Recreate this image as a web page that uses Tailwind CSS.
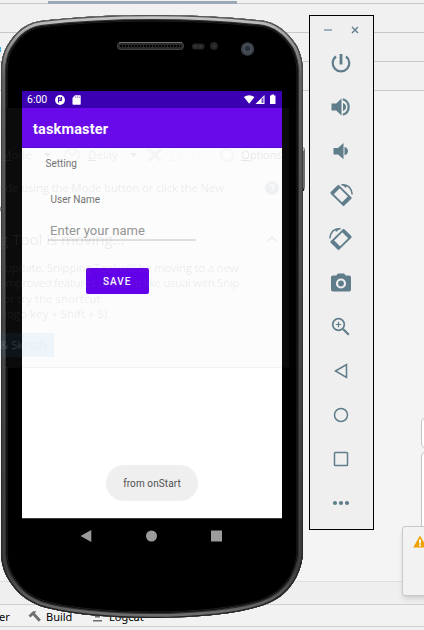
<!DOCTYPE html>
<html lang="en">
<head>
<meta charset="utf-8">
<title>Android Emulator</title>
<script src="https://cdn.jsdelivr.net/npm/@tailwindcss/browser@4"></script>
</head>
<body class="overflow-hidden">
<div class="relative w-[424px] h-[630px] overflow-hidden bg-[#f1f1f1] font-['Roboto',sans-serif]">

  <!-- IDE window behind the emulator -->
  <div class="flex flex-col h-full">
    <div class="h-1 shrink-0 border-b border-[#c9c9c9] relative"><div class="absolute left-12 top-[1px] w-[189px] h-[3px] bg-[#9aa7b5]"></div></div>
    <div class="h-[29px] shrink-0 border-b border-[#c9c9c9]"></div>
    <div class="h-[29px] shrink-0 border-b border-[#c9c9c9] flex items-end"><div class="w-[1px] h-[5px] mb-[9px] bg-[#40b6e0]"></div></div>
    <div class="h-[29px] shrink-0 border-b border-[#c9c9c9]"></div>
    <div class="h-[491px] shrink-0 border-b border-[#dfdfdf] bg-[#f4f4f4]"></div>
    <div class="h-[23px] shrink-0 border-b border-[#cfcfcf] bg-[#efefef]"></div>
    <div class="h-[22px] shrink-0 border-b border-[#cfcfcf] bg-[#f2f2f2] flex items-center font-['Noto_Sans',sans-serif] text-[11px] text-black pt-[2px] leading-[16px]">
      <span class="w-[28px] -ml-[1px]">er</span>
      <svg class="w-[15px] h-[14px]" viewBox="0 0 15 14"><path d="M1.500 5.500 6 1.200h3.500L7.800 3l6 6.800-2 2-6-6.600-2.300 2.400z" fill="#6e6e6e"/></svg>
      <span class="ml-[4px] w-[46px]">Build</span>
      <svg class="w-[11px] h-[12px]" viewBox="0 0 11 12"><path d="M2 1h5v1.500H2zM3 5h5v1.500H3zM1 9h9v1.500H1z" fill="#6e6e6e"/></svg>
      <span class="ml-[6px]">Logcat</span>
    </div>
  </div>

  <div class="absolute left-[421px] top-[418px] w-5 h-[30px] rounded border border-[#c4c4c4] bg-white"></div>
  <div class="absolute left-[421px] top-[452px] w-5 h-[90px] rounded border border-[#c4c4c4] bg-white"></div>
  <div class="absolute left-[402px] top-[526px] w-10 h-[70px] rounded-[3px] border border-[#c9c9c9] bg-[#f2f2f2] shadow-md pl-[10px] pt-[8px]">
    <svg class="w-[14px] h-[13px]" viewBox="0 0 14 13"><path d="M7 .5 13.800 12.500H.2z" fill="#eda200"/><path d="M6 4.500h2v4H6zM6 9.500h2v1.700H6z" fill="#fff"/></svg>
  </div>

  <!-- Phone body -->
  <svg class="absolute inset-0 w-[424px] h-[630px]" viewBox="0 0 424 630">
    <defs>
      <linearGradient id="rim" gradientUnits="userSpaceOnUse" x1="0" y1="15" x2="0" y2="618">
        <stop offset="0" stop-color="#c8c8c8"/><stop offset=".03" stop-color="#a8a8a8"/><stop offset=".1" stop-color="#626262"/><stop offset=".5" stop-color="#484848"/><stop offset=".92" stop-color="#3c3c3c"/><stop offset="1" stop-color="#707070"/>
      </linearGradient>
      <linearGradient id="edge" gradientUnits="userSpaceOnUse" x1="0" y1="15" x2="0" y2="618">
        <stop offset="0" stop-color="#555"/><stop offset=".1" stop-color="#444"/><stop offset="1" stop-color="#222"/>
      </linearGradient>
      <path id="body" d="M152 15C110 15 75 17 40 21C21 24 12 38 7 46Q1 56 1 72V555Q2 571 10 582C18 594 26 600 40 606C65 614 110 618 152 618C194 618 239 614 264 605C278 600 286 593 293 583Q301 571 303 555V72Q303 58 297 46C291 37 282 25 265 21C230 17 194 15 152 15Z"/>
      <clipPath id="bodyclip"><use href="#body"/></clipPath>
      <pattern id="mesh" width="3" height="3" patternUnits="userSpaceOnUse"><path d="M0 0h2v2H0z" fill="#000"/></pattern>
    </defs>
    <path d="M302 147h2l1 3v37l-1 4h-2z" fill="#6c6c6c"/>
    <path d="M302 147h2v4h-2z" fill="#bbb"/>
    <path d="M302 188h2v3h-2z" fill="#222"/>
    <g clip-path="url(#bodyclip)">
      <use href="#body" fill="#000"/>
      <use href="#body" fill="none" stroke="#222" stroke-width="13"/>
      <use href="#body" fill="none" stroke="#000" stroke-width="11.500"/>
      <use href="#body" fill="none" stroke="#303030" stroke-width="10.500"/>
      <use href="#body" fill="none" stroke="url(#rim)" stroke-width="8"/>
      <use href="#body" fill="none" stroke="url(#edge)" stroke-width="2.500"/>
    </g>
    <path d="M0 206v6l1.500-3z" fill="#888"/>
    <rect x="117.500" y="42.500" width="66" height="7" rx="3" fill="#292929" stroke="#444"/>
    <rect x="120" y="44" width="61" height="4" fill="url(#mesh)"/>
    <path d="M119 42.500h63" stroke="#707070"/>
    <rect x="192" y="43.500" width="12.500" height="6" rx="3" fill="#262626"/>
    <circle cx="195.500" cy="46.500" r="1.500" fill="#363636"/><circle cx="200.500" cy="46.500" r="1.500" fill="#363636"/>
    <circle cx="214" cy="46" r="4" fill="#232323"/><circle cx="214" cy="46" r="1.800" fill="#333"/>
    <circle cx="247.500" cy="49" r="6.700" fill="#3a4049"/><circle cx="247.500" cy="49" r="5" fill="#464c57"/><circle cx="247.500" cy="48.500" r="2.500" fill="#282d35"/>
    <path d="M6 108h283v259H6z" fill="#0c0c0c"/>
  </svg>

  <!-- Device screen -->
  <div class="absolute left-[22px] top-[91px] w-[260px] h-[462px] flex flex-col bg-black">
    <div class="h-[17px] shrink-0 bg-[#3a00b2] flex items-center text-white px-[5px]">
      <span class="text-[10.500px] leading-[15px] w-[28px]">6:00</span>
      <svg class="w-[10px] h-[10px]" viewBox="0 0 10 10"><circle cx="5" cy="5" r="4.900" fill="#fff"/><path d="M3.500 2.200v5.300M3.500 2.700h1.700v2.600H3.500M6.600 2v3.600H5" fill="none" stroke="#3a00b2" stroke-width="1"/></svg>
      <svg class="w-[9px] h-[10px] ml-[7px]" viewBox="0 0 9 10"><path d="M3 .2h5q.7 0 .7.7v8.200q0 .7-.7.7H1.200q-.7 0-.7-.7V3z" fill="#fff"/><path d="M3.600 1.500v1.500M5.400 1.500v1.500M7.200 1.500v1.500" stroke="#8a66d2" stroke-width=".8"/></svg>
      <svg class="w-[34px] h-[11px] ml-auto" viewBox="0 0 34 11"><path d="M.9 3Q6 -.7 11.500 3L6.200 9.800z" fill="#fff"/><path d="M12.500 10 21.500 1v9z" fill="#fff"/><path d="M18.500 5v4h2v-6z" fill="#7a4fcf"/><path d="M27 1.500h1.500V.5h2.500v1h1.500V10H27z" fill="#fff"/></svg>
    </div>
    <div class="h-[40px] shrink-0 bg-[#6a0bed] border-b border-[#6008dc] flex items-center pl-[11px] pt-[4px] text-white text-[14.500px] font-bold tracking-[0.15px]">taskmaster</div>
    <div class="h-[370px] shrink-0 bg-white flex flex-col items-start text-[#757575]">
      <div class="pl-[23.500px] pt-[9px] h-[27px] text-[10px] leading-[13px]">Setting</div>
      <div class="pl-[28.500px] pt-[18px] h-[42px] text-[10px] leading-[13px]">User Name</div>
      <div class="ml-[26px] pl-[2px] w-[148px] h-[24px] border-b-2 border-[#e2e2e2] text-[13px] leading-[27px] text-[#979797] tracking-[0.05px]">Enter your name</div>
      <div class="ml-[63.500px] mt-[27px] w-[63.500px] h-[26px] rounded-[2px] bg-[#6500ed] text-white text-[10px] font-medium tracking-[1px] flex items-center justify-center shrink-0">SAVE</div>
      <div class="grow"></div>
      <div class="ml-[84px] mb-[17px] w-[92px] h-[36px] rounded-[18px] bg-[#efefef] text-[#505050] text-[10px] flex items-center justify-center shrink-0 tracking-[0.1px]">from onStart</div>
    </div>
    <div class="h-[35px] shrink-0 border-t border-[#3c3c3c] flex items-center pl-[58px]">
      <svg class="w-[143px] h-[12px]" viewBox="0 0 143 12"><path d="M.5 6 11.300 0v12z" fill="#9c9c9c"/><circle cx="71.500" cy="6" r="5.500" fill="#9c9c9c"/><rect x="131" y=".5" width="11" height="11" fill="#9c9c9c"/></svg>
    </div>
  </div>

  <!-- Fading translucent window over the device -->
  <div class="absolute left-0 top-[108px] w-[289px] h-[260px] overflow-hidden bg-black/1 border-b border-[#808080]/8 font-['Open_Sans',sans-serif] text-[11.500px] text-[#808080]/14 leading-[16px] whitespace-nowrap flex flex-col">
    <div class="flex items-center h-[26px] mt-[33px] pt-[2px]">
      <span class="pl-[1px] w-[44px]"><u>M</u>ode</span>
      <svg class="w-[7px] h-[4px]" viewBox="0 0 7 4"><path d="M0 0h7L3.500 4z" fill="#808080" fill-opacity=".12"/></svg>
      <svg class="w-[18px] h-[16px] ml-[12px]" viewBox="0 0 18 16"><circle cx="9" cy="8" r="7" fill="none" stroke="#808080" stroke-opacity=".05" stroke-width="2"/><path d="M5 5l4 3 4-3" fill="none" stroke="#808080" stroke-opacity=".08" stroke-width="1.500"/></svg>
      <span class="ml-[7px] w-[42px]"><u>D</u>elay</span>
      <svg class="w-[7px] h-[4px]" viewBox="0 0 7 4"><path d="M0 0h7L3.500 4z" fill="#808080" fill-opacity=".12"/></svg>
      <svg class="w-[17px] h-[16px] ml-[9px]" viewBox="0 0 17 16"><path d="M2 2l13 12M15 2L2 14" stroke="#808080" stroke-opacity=".06" stroke-width="3.500"/></svg>
      <span class="ml-[7px] w-[50px] text-[#808080]/6"><u>C</u>ancel</span>
      <svg class="w-[14px] h-[14px]" viewBox="0 0 14 14"><circle cx="7" cy="7" r="6" fill="none" stroke="#808080" stroke-opacity=".05" stroke-width="2"/></svg>
      <span class="ml-[7px] text-[#808080]/18 tracking-[-0.3px]"><u>O</u>ptions</span>
    </div>
    <div class="flex items-center h-[16px] mt-[13px]">
      <span class="-ml-[12px] w-[277px] tracking-[-0.2px]">mode using the Mode button or click the New</span>
      <svg class="w-[14px] h-[14px]" viewBox="0 0 14 14"><circle cx="7" cy="7" r="7" fill="#607da0" fill-opacity=".09"/><path d="M5 5.500q0-2 2-2t2 1.700q0 1-2 2.300v1M7 9.500v1.300" fill="none" stroke="#fff" stroke-width="1.200"/></svg>
    </div>
    <div class="flex items-center h-[22px] mt-[32px]">
      <span class="-ml-[9px] w-[276px] text-[15px] leading-[21px]">ng Tool is moving...</span>
      <svg class="w-[10px] h-[6px]" viewBox="0 0 10 6"><path d="M1 5l4-4 4 4" fill="none" stroke="#808080" stroke-opacity=".12" stroke-width="1.500"/></svg>
    </div>
    <div class="mt-[10px] text-[11.500px] leading-[15.300px]">
      <div class="-ml-[4px] tracking-[-0.26px]">e update, Snipping Tool will be moving to a new</div>
      <div class="-ml-[5px] tracking-[-0.37px]">y improved features and snip like usual with Snip</div>
      <div class="-ml-[6px]">y or try the shortcut</div>
      <div class="ml-[4px]">logo key + Shift + S).</div>
    </div>
    <div class="mt-[12px] w-[54px] h-[24px] flex items-center bg-[#3498e8]/7 text-[#c8d4dc]/20 tracking-[-0.1px]">&amp; Sketch</div>
  </div>

  <!-- Emulator toolbar -->
  <div class="absolute left-[309px] top-[15px] w-[65px] h-[515px] border border-black bg-[#efefef] text-[#607d8b]">
    <div class="flex h-[25px] pt-[9px] pl-[14px]">
      <svg class="w-[8px] h-[11px]" viewBox="0 0 8 11"><path d="M0 5h8" stroke="#9fb1ba" stroke-width="2"/></svg>
      <svg class="w-[8px] h-[11px] ml-[19px]" viewBox="0 0 8 11"><path d="M1 2l6 6M7 2L1 8" stroke="currentColor" stroke-width="1.400"/></svg>
    </div>
    <div class="flex flex-col items-center -ml-px">
      <div class="h-[44px] flex items-center"><svg class="w-6 h-6" viewBox="0 0 24 24" fill="none" stroke="currentColor" stroke-width="2.200"><path d="M12 3v10.500" stroke-width="2.800"/><path d="M7 5.500a8.300 8.300 0 1 0 10 0" /></svg></div>
      <div class="h-[44px] flex items-center"><svg class="w-6 h-6" viewBox="0 0 24 24"><path d="M2.500 8.500v7h4.700l5.300 5V3.500L7.200 8.500zM14 8v8c1.900-.7 3-2.200 3-4s-1.100-3.300-3-4z" fill="currentColor"/><path d="M13.800 4.300a8 8 0 0 1 0 15.400" fill="none" stroke="currentColor" stroke-width="2.200"/></svg></div>
      <div class="h-[44px] flex items-center"><svg class="w-6 h-6" viewBox="0 0 24 24" fill="currentColor"><path d="M4.500 9v6.500h4.500l5.500 4.700V4L9 9zM15.500 8v8.300c2.200-.4 3.500-2.200 3.500-4.200s-1.300-3.700-3.500-4.100z"/></svg></div>
      <div class="h-[44px] flex items-center"><svg class="w-6 h-6" viewBox="0 0 24 24" fill="none" stroke="currentColor"><path d="M9.500 2.800 21.700 15 14.500 22.200 2.300 10z" stroke-width="1.800" stroke-linejoin="round"/><path d="M8.500 2.500 1.800 9.200l2.200 2.800 7-7zM22.300 14.500l-7.500 8-2.500-2.500 7.500-7.500z" fill="currentColor" stroke="none"/><path d="M12.500 1.800Q22 1 23.200 11.500" stroke-width="1.500"/><path d="M12 1l6 1-1 3z" fill="currentColor" stroke="none"/></svg></div>
      <div class="h-[44px] flex items-center"><svg class="w-6 h-6" viewBox="0 0 24 24" fill="none" stroke="currentColor"><path d="M14.500 2.800 2.300 15 9.500 22.200 21.700 10z" stroke-width="1.800" stroke-linejoin="round"/><path d="M15.500 2.500l6.700 6.700L20 12l-7-7zM1.700 14.500l7.500 8 2.500-2.500-7.500-7.500z" fill="currentColor" stroke="none"/><path d="M11.500 1.800Q2 1 .8 11.500" stroke-width="1.500"/><path d="M12 1 6 2l1 3z" fill="currentColor" stroke="none"/></svg></div>
      <div class="h-[44px] flex items-center"><svg class="w-6 h-6" viewBox="0 0 24 24"><path d="M9 2.500 7.200 4.500H4a2 2 0 0 0-2 2v12a2 2 0 0 0 2 2h16a2 2 0 0 0 2-2v-12a2 2 0 0 0-2-2h-3.200L15 2.500z" fill="currentColor"/><circle cx="12" cy="12.500" r="4" fill="none" stroke="#efefef" stroke-width="2.200"/></svg></div>
      <div class="h-[44px] flex items-center"><svg class="w-6 h-6" viewBox="0 0 24 24" fill="none" stroke="currentColor"><circle cx="9.500" cy="9.500" r="5.800" stroke-width="1.700"/><path d="M9.500 6.800v5.400M6.800 9.500h5.400" stroke-width="1.200"/><path d="M14 14l5.800 5.800" stroke-width="2.200"/></svg></div>
      <div class="h-[44px] flex items-center"><svg class="w-6 h-6" viewBox="0 0 24 24" fill="none" stroke="currentColor" stroke-width="1.500"><path d="M6.500 12 17.500 5.500v13z"/></svg></div>
      <div class="h-[44px] flex items-center"><svg class="w-6 h-6" viewBox="0 0 24 24" fill="none" stroke="currentColor" stroke-width="1.500"><circle cx="12" cy="12" r="6.500"/></svg></div>
      <div class="h-[44px] flex items-center"><svg class="w-6 h-6" viewBox="0 0 24 24" fill="none" stroke="currentColor" stroke-width="1.500"><rect x="5.500" y="5.500" width="13" height="13" rx=".8"/></svg></div>
      <div class="h-[44px] flex items-center"><svg class="w-6 h-6" viewBox="0 0 24 24" fill="currentColor"><circle cx="6" cy="12" r="2.100"/><circle cx="12" cy="12" r="2.100"/><circle cx="18" cy="12" r="2.100"/></svg></div>
    </div>
  </div>
</div>
</body>
</html>
